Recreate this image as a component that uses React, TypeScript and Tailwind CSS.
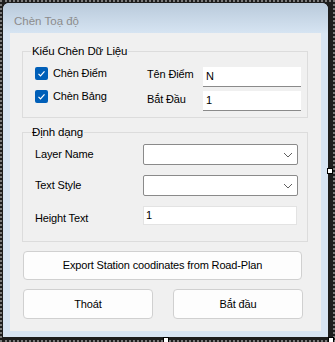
import React from "react";

function Check() {
  return (
    <div className="w-[13px] h-[13px] rounded-[2px] bg-[#005fb8] flex items-center justify-center shrink-0">
      <svg width="9" height="9" viewBox="0 0 9 9">
        <polyline points="1.5,4.8 3.5,6.8 7.5,2.3" fill="none" stroke="#fff" strokeWidth="1.2" />
      </svg>
    </div>
  );
}

function Combo() {
  return (
    <div className="w-[155px] h-[21px] bg-white border border-[#8a8a8a] rounded-[2px] flex items-center justify-end pr-[4px]">
      <svg width="10" height="6" viewBox="0 0 10 6">
        <polyline points="1,1 5,5 9,1" fill="none" stroke="#606060" strokeWidth="1" />
      </svg>
    </div>
  );
}

function Handle({ className }: { className: string }) {
  return <div className={"absolute w-[6px] h-[6px] bg-white border border-black " + className} />;
}

export default function App() {
  return (
    <div className="relative w-[335px] h-[342px] bg-[#1e1e1e] border-[2px] border-dotted border-[#7a7a7a] font-['Liberation_Sans',sans-serif] text-[11px] tracking-[-0.15px] text-black">
      <div className="absolute left-[1px] top-[1px] w-[325px] h-[334px] rounded-t-[6px] bg-[#d8e5f3] flex flex-col">
        {/* title bar */}
        <div className="h-[30px] shrink-0 rounded-t-[6px] bg-gradient-to-b from-[#b9cadb] to-[#d6e4f2] pl-[11px] pt-[11px]">
          <span className="block leading-[14px] text-[11.5px] tracking-normal text-[#8c8c8c]">Chèn Toạ độ</span>
        </div>

        {/* client area */}
        <div className="mx-[7px] h-[298px] bg-[#f0f0f0] pl-[12px] pt-[11px]">
          <fieldset className="w-[286px] h-[74px] border border-[#dcdcdc]">
            <legend className="ml-[8px] px-[1px] leading-[14px] text-[11.5px]">Kiểu Chèn Dữ Liệu</legend>
            <div className="flex items-start mt-[9px] h-[23px]">
              <div className="ml-[12px]">
                <Check />
              </div>
              <div className="ml-[5px] w-[94px] h-[13px] flex items-center leading-none">Chèn Điểm</div>
              <div className="w-[56px] leading-[14px]">Tên Điểm</div>
              <div className="w-[98px] h-[20px] bg-white border-b border-[#8a8a8a] pl-[3px] flex items-center">N</div>
            </div>
            <div className="flex items-start h-[23px]">
              <div className="ml-[12px]">
                <Check />
              </div>
              <div className="ml-[5px] w-[94px] h-[13px] flex items-center leading-none">Chèn Bảng</div>
              <div className="w-[56px] leading-[14px] mt-[2px]">Bắt Đầu</div>
              <div className="w-[98px] h-[20px] mt-[1px] bg-white border-b border-[#8a8a8a] pl-[3px] flex items-center">1</div>
            </div>
          </fieldset>

          <fieldset className="mt-[7px] w-[286px] h-[117px] border border-[#dcdcdc]">
            <legend className="ml-[8px] px-[1px] leading-[14px] text-[11.5px]">Định dạng</legend>
            <div className="flex items-center mt-[5px] pl-[12px]">
              <div className="w-[108px] leading-[14px] mt-[-2px]">Layer Name</div>
              <Combo />
            </div>
            <div className="flex items-center mt-[10px] pl-[12px]">
              <div className="w-[108px] leading-[14px] mt-[-2px]">Text Style</div>
              <Combo />
            </div>
            <div className="flex items-center mt-[9px] pl-[12px]">
              <div className="w-[108px] leading-[14px] mt-[6px]">Height Text</div>
              <div className="w-[154px] h-[19px] bg-white border border-[#e3e3e3] pl-[2px] flex items-center">1</div>
            </div>
          </fieldset>

          <button className="mt-[9px] ml-[1px] w-[279px] h-[29px] bg-[#fdfdfd] border border-[#d0d0d0] rounded-[4px] flex items-center justify-center">
            Export Station coodinates from Road-Plan
          </button>
          <div className="mt-[9px] ml-[1px] flex gap-[20px]">
            <button className="w-[130px] h-[30px] bg-[#fdfdfd] border border-[#d0d0d0] rounded-[4px]">Thoát</button>
            <button className="w-[130px] h-[30px] bg-[#fdfdfd] border border-[#d0d0d0] rounded-[4px]">Bắt đầu</button>
          </div>
        </div>
      </div>

      <Handle className="left-[325px] top-[166px]" />
      <Handle className="left-[161px] top-[335px]" />
      <Handle className="left-[326px] top-[335px]" />
    </div>
  );
}
